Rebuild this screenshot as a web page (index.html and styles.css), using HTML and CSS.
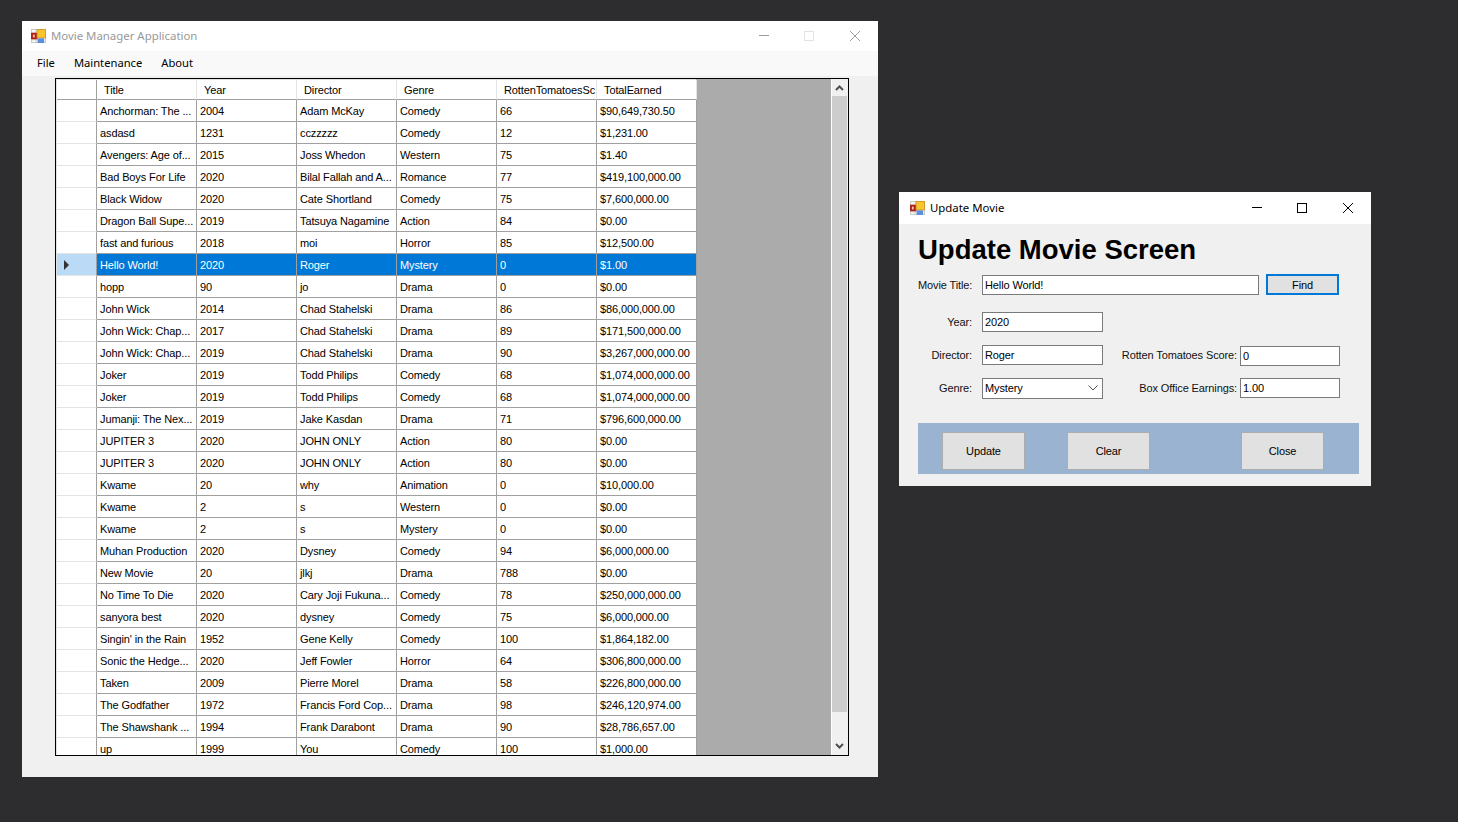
FILE: index.html
```html
<!DOCTYPE html>
<html lang="en">
<head>
    <meta charset="UTF-8">
    <title>Movie Manager Application</title>
    <link rel="stylesheet" href="styles.css">
</head>
<body>
    <!-- main window (inactive) -->
    <div class="window main-window">
        <div class="titlebar">
            <svg class="app-icon" viewBox="0 0 16 15">
                <rect x="0.5" y="0.5" width="15" height="14" fill="#f6f6f6" stroke="#c8c8c8"/>
                <path d="M5.5 0V15M0 4.5H6M0 11.5H6" stroke="#c8c8c8" fill="none"/>
                <rect x="0" y="4" width="7" height="7" fill="#b01e16"/>
                <rect x="2" y="6" width="2" height="3" fill="#f2c4b4"/>
                <rect x="6.5" y="0.5" width="9" height="9" fill="#f7c52e" stroke="#d49a22"/>
                <rect x="7" y="10" width="7" height="5" fill="#5b8fdc"/>
            </svg>
            <span class="title-text">Movie Manager Application</span>
            <div class="caption-btns">
                <svg width="12" height="12" viewBox="0 0 12 12"><path d="M2 5.5H12" stroke="#9d9d9d" fill="none"/></svg>
                <svg width="12" height="12" viewBox="0 0 12 12"><rect x="1.5" y="1.5" width="9" height="9" stroke="#e3e3e3" fill="none"/></svg>
                <svg width="12" height="12" viewBox="0 0 12 12"><path d="M1 1L11 11M11 1L1 11" stroke="#9d9d9d" fill="none"/></svg>
            </div>
        </div>
        <div class="menubar">
            <span>File</span>
            <span>Maintenance</span>
            <span>About</span>
        </div>
        <div class="grid-wrap">
            <div class="grid">
                <table class="movies">
                    <thead>
                        <tr><th class="row-head"></th><th>Title</th><th>Year</th><th>Director</th><th>Genre</th><th>RottenTomatoesSc</th><th>TotalEarned</th></tr>
                    </thead>
                    <tbody>
                        <tr><td class="row-head"></td><td>Anchorman: The ...</td><td>2004</td><td>Adam McKay</td><td>Comedy</td><td>66</td><td>$90,649,730.50</td></tr>
                        <tr><td class="row-head"></td><td>asdasd</td><td>1231</td><td>cczzzzz</td><td>Comedy</td><td>12</td><td>$1,231.00</td></tr>
                        <tr><td class="row-head"></td><td>Avengers: Age of...</td><td>2015</td><td>Joss Whedon</td><td>Western</td><td>75</td><td>$1.40</td></tr>
                        <tr><td class="row-head"></td><td>Bad Boys For Life</td><td>2020</td><td>Bilal Fallah and A...</td><td>Romance</td><td>77</td><td>$419,100,000.00</td></tr>
                        <tr><td class="row-head"></td><td>Black Widow</td><td>2020</td><td>Cate Shortland</td><td>Comedy</td><td>75</td><td>$7,600,000.00</td></tr>
                        <tr><td class="row-head"></td><td>Dragon Ball Supe...</td><td>2019</td><td>Tatsuya Nagamine</td><td>Action</td><td>84</td><td>$0.00</td></tr>
                        <tr><td class="row-head"></td><td>fast and furious</td><td>2018</td><td>moi</td><td>Horror</td><td>85</td><td>$12,500.00</td></tr>
                        <tr class="selected"><td class="row-head"><span class="row-arrow"></span></td><td>Hello World!</td><td>2020</td><td>Roger</td><td>Mystery</td><td>0</td><td>$1.00</td></tr>
                        <tr><td class="row-head"></td><td>hopp</td><td>90</td><td>jo</td><td>Drama</td><td>0</td><td>$0.00</td></tr>
                        <tr><td class="row-head"></td><td>John Wick</td><td>2014</td><td>Chad Stahelski</td><td>Drama</td><td>86</td><td>$86,000,000.00</td></tr>
                        <tr><td class="row-head"></td><td>John Wick: Chap...</td><td>2017</td><td>Chad Stahelski</td><td>Drama</td><td>89</td><td>$171,500,000.00</td></tr>
                        <tr><td class="row-head"></td><td>John Wick: Chap...</td><td>2019</td><td>Chad Stahelski</td><td>Drama</td><td>90</td><td>$3,267,000,000.00</td></tr>
                        <tr><td class="row-head"></td><td>Joker</td><td>2019</td><td>Todd Philips</td><td>Comedy</td><td>68</td><td>$1,074,000,000.00</td></tr>
                        <tr><td class="row-head"></td><td>Joker</td><td>2019</td><td>Todd Philips</td><td>Comedy</td><td>68</td><td>$1,074,000,000.00</td></tr>
                        <tr><td class="row-head"></td><td>Jumanji: The Nex...</td><td>2019</td><td>Jake Kasdan</td><td>Drama</td><td>71</td><td>$796,600,000.00</td></tr>
                        <tr><td class="row-head"></td><td>JUPITER 3</td><td>2020</td><td>JOHN ONLY</td><td>Action</td><td>80</td><td>$0.00</td></tr>
                        <tr><td class="row-head"></td><td>JUPITER 3</td><td>2020</td><td>JOHN ONLY</td><td>Action</td><td>80</td><td>$0.00</td></tr>
                        <tr><td class="row-head"></td><td>Kwame</td><td>20</td><td>why</td><td>Animation</td><td>0</td><td>$10,000.00</td></tr>
                        <tr><td class="row-head"></td><td>Kwame</td><td>2</td><td>s</td><td>Western</td><td>0</td><td>$0.00</td></tr>
                        <tr><td class="row-head"></td><td>Kwame</td><td>2</td><td>s</td><td>Mystery</td><td>0</td><td>$0.00</td></tr>
                        <tr><td class="row-head"></td><td>Muhan Production</td><td>2020</td><td>Dysney</td><td>Comedy</td><td>94</td><td>$6,000,000.00</td></tr>
                        <tr><td class="row-head"></td><td>New Movie</td><td>20</td><td>jlkj</td><td>Drama</td><td>788</td><td>$0.00</td></tr>
                        <tr><td class="row-head"></td><td>No Time To Die</td><td>2020</td><td>Cary Joji Fukuna...</td><td>Comedy</td><td>78</td><td>$250,000,000.00</td></tr>
                        <tr><td class="row-head"></td><td>sanyora best</td><td>2020</td><td>dysney</td><td>Comedy</td><td>75</td><td>$6,000,000.00</td></tr>
                        <tr><td class="row-head"></td><td>Singin' in the Rain</td><td>1952</td><td>Gene Kelly</td><td>Comedy</td><td>100</td><td>$1,864,182.00</td></tr>
                        <tr><td class="row-head"></td><td>Sonic the Hedge...</td><td>2020</td><td>Jeff Fowler</td><td>Horror</td><td>64</td><td>$306,800,000.00</td></tr>
                        <tr><td class="row-head"></td><td>Taken</td><td>2009</td><td>Pierre Morel</td><td>Drama</td><td>58</td><td>$226,800,000.00</td></tr>
                        <tr><td class="row-head"></td><td>The Godfather</td><td>1972</td><td>Francis Ford Cop...</td><td>Drama</td><td>98</td><td>$246,120,974.00</td></tr>
                        <tr><td class="row-head"></td><td>The Shawshank ...</td><td>1994</td><td>Frank Darabont</td><td>Drama</td><td>90</td><td>$28,786,657.00</td></tr>
                        <tr><td class="row-head"></td><td>up</td><td>1999</td><td>You</td><td>Comedy</td><td>100</td><td>$1,000.00</td></tr>
                    </tbody>
                </table>
                <div class="scrollbar">
                    <svg class="scroll-arrow" width="15" height="17" viewBox="0 0 15 17"><path d="M4 11L7.5 7.5L11 11" stroke="#505050" stroke-width="2" fill="none"/></svg>
                    <div class="scroll-track"><div class="scroll-thumb"></div></div>
                    <svg class="scroll-arrow" width="15" height="17" viewBox="0 0 15 17"><path d="M4 6L7.5 9.5L11 6" stroke="#505050" stroke-width="2" fill="none"/></svg>
                </div>
            </div>
        </div>
    </div>

    <!-- update dialog (active) -->
    <div class="window update-window">
        <div class="titlebar">
            <svg class="app-icon" viewBox="0 0 16 15">
                <rect x="0.5" y="0.5" width="15" height="14" fill="#f6f6f6" stroke="#c8c8c8"/>
                <path d="M5.5 0V15M0 4.5H6M0 11.5H6" stroke="#c8c8c8" fill="none"/>
                <rect x="0" y="4" width="7" height="7" fill="#b01e16"/>
                <rect x="2" y="6" width="2" height="3" fill="#f2c4b4"/>
                <rect x="6.5" y="0.5" width="9" height="9" fill="#f7c52e" stroke="#d49a22"/>
                <rect x="7" y="10" width="7" height="5" fill="#5b8fdc"/>
            </svg>
            <span class="title-text">Update Movie</span>
            <div class="caption-btns">
                <svg width="12" height="12" viewBox="0 0 12 12"><path d="M2 5.5H12" stroke="#000" fill="none"/></svg>
                <svg width="12" height="12" viewBox="0 0 12 12"><rect x="1.5" y="1.5" width="9" height="9" stroke="#000" fill="none"/></svg>
                <svg width="12" height="12" viewBox="0 0 12 12"><path d="M1 1L11 11M11 1L1 11" stroke="#000" fill="none"/></svg>
            </div>
        </div>
        <div class="form-body">
            <h1>Update Movie Screen</h1>
            <div class="form-row row-title">
                <label>Movie Title:</label>
                <div class="field field-wide">Hello World!</div>
                <button class="find-btn" type="button">Find</button>
            </div>
            <div class="form-row row-year">
                <label>Year:</label>
                <div class="field">2020</div>
            </div>
            <div class="form-row row-director">
                <label>Director:</label>
                <div class="field">Roger</div>
                <label class="label-right">Rotten Tomatoes Score:</label>
                <div class="field field-right">0</div>
            </div>
            <div class="form-row row-genre">
                <label>Genre:</label>
                <div class="field combo">Mystery
                    <svg width="10" height="6" viewBox="0 0 10 6"><path d="M0.5 0.5L5 5L9.5 0.5" stroke="#555" fill="none"/></svg>
                </div>
                <label class="label-right">Box Office Earnings:</label>
                <div class="field field-right">1.00</div>
            </div>
            <div class="button-panel">
                <button type="button">Update</button>
                <button type="button" class="btn-clear">Clear</button>
                <button type="button" class="btn-close">Close</button>
            </div>
        </div>
    </div>
</body>
</html>
```

FILE: styles.css
```css
body {
    margin: 0;
    height: 822px;
    overflow: hidden;
    background-color: #2d2d30;
    font-family: "Liberation Sans", Arial, sans-serif;
    font-size: 11px;
    letter-spacing: -0.12px;
    color: #000;
}

/* windows sit on a free desktop */
.window {
    position: absolute;
    background-color: #f0f0f0;
    box-sizing: border-box;
}

.main-window {
    left: 22px;
    top: 21px;
    width: 856px;
    height: 756px;
}

.update-window {
    left: 899px;
    top: 192px;
    width: 472px;
    height: 294px;
}

/* title bars */
.titlebar {
    display: flex;
    align-items: center;
    height: 30px;
    padding-left: 9px;
    background-color: #fff;
    font-family: "Noto Sans", "Open Sans", sans-serif;
    font-size: 11.4px;
    letter-spacing: 0;
}

.title-text {
    position: relative;
    top: -1px;
}

.update-window .titlebar {
    height: 32px;
    padding-left: 11px;
}

.app-icon {
    flex: none;
    width: 15px;
    height: 14px;
    margin-right: 5px;
}

.main-window .title-text {
    color: #999;
}

.caption-btns {
    display: flex;
    gap: 34px;
    margin-left: auto;
    padding-right: 17px;
}

/* menu */
.menubar {
    display: flex;
    align-items: center;
    gap: 19px;
    height: 25px;
    padding: 0 0 2px 15px;
    box-sizing: border-box;
    background-color: #f9f9f9;
    font-family: "Noto Sans", "Open Sans", sans-serif;
    font-size: 11.2px;
    letter-spacing: 0;
}

/* data grid */
.grid-wrap {
    padding: 2px 0 0 33px;
}

.grid {
    display: flex;
    justify-content: space-between;
    box-sizing: border-box;
    width: 794px;
    height: 678px;
    border: 1px solid #000;
    background-color: #ababab;
    overflow: hidden;
}

.movies {
    border-collapse: separate;
    border-spacing: 0;
    table-layout: fixed;
    width: 640px;
    height: min-content;
    margin: 1px 0 0 1px;
    background-color: #fff;
    box-shadow: -1px -1px 0 #e2e2e2;
}

.movies th,
.movies td {
    box-sizing: border-box;
    width: 100px;
    padding: 0 0 0 3px;
    white-space: nowrap;
    overflow: hidden;
    font-weight: normal;
    text-align: left;
    border-right: 1px solid #a0a0a0;
    border-bottom: 1px solid #a0a0a0;
}

.movies td {
    height: 22px;
}

.movies th {
    height: 20px;
    padding-left: 7px;
    border-right-color: #e4e4e4;
}

.movies .row-head {
    position: relative;
    width: 40px;
    padding: 0;
    border-bottom-color: #e4e4e4;
    border-right-color: #a0a0a0;
}

.movies th.row-head {
    border-bottom-color: #a0a0a0;
}

.selected td {
    background-color: #0078d7;
    color: #fff;
}

.movies .selected .row-head {
    background-color: #bbdaf5;
}

.row-arrow {
    position: absolute;
    left: 7px;
    top: 6px;
    border-left: 5px solid #333;
    border-top: 5px solid transparent;
    border-bottom: 5px solid transparent;
}

.scrollbar {
    display: flex;
    flex-direction: column;
    flex: none;
    width: 15px;
    padding-right: 1px;
    background-color: #f0f0f0;
    border-left: 1px solid #fff;
}

.scroll-arrow {
    flex: none;
}

.scroll-track {
    flex: 1;
}

.scroll-thumb {
    height: 616px;
    background-color: #cdcdcd;
}

/* update form */
.form-body {
    padding: 0 12px 0 19px;
}

h1 {
    margin: 0;
    padding-top: 10px;
    height: 41px;
    font-size: 27.5px;
    line-height: 32px;
    font-weight: bold;
    letter-spacing: 0;
}

.form-row {
    display: flex;
    align-items: center;
    height: 20px;
}

.row-year {
    margin-top: 17px;
}

.row-director,
.row-genre {
    margin-top: 13px;
}

.form-row label {
    flex: none;
    width: 54px;
    margin-right: 10px;
    text-align: right;
    color: #111;
    white-space: nowrap;
}

.form-row .label-right {
    width: 134px;
    margin-right: 3px;
}

.field {
    flex: none;
    box-sizing: border-box;
    width: 121px;
    height: 20px;
    padding: 0 2px;
    line-height: 18px;
    background-color: #fff;
    border: 1px solid #7a7a7a;
}

.field-wide {
    width: 277px;
}

.field-right {
    width: 100px;
}

.row-director .field-right {
    align-self: flex-start;
    margin-top: 1px;
}

.combo {
    display: flex;
    align-items: center;
    justify-content: space-between;
    padding-right: 4px;
    height: 21px;
}

button {
    font-family: "Liberation Sans", Arial, sans-serif;
    font-size: 11px;
    letter-spacing: -0.12px;
    color: #000;
    background-color: #e1e1e1;
    border: 1px solid #adadad;
    padding: 0;
}

.find-btn {
    align-self: flex-start;
    width: 73px;
    height: 21px;
    margin: -1px 0 0 7px;
    border: 2px solid #0078d7;
}

.button-panel {
    display: flex;
    align-items: flex-start;
    box-sizing: border-box;
    width: 441px;
    height: 51px;
    margin-top: 25px;
    padding: 9px 0 0 24px;
    background-color: #9ab3d1;
}

.button-panel button {
    width: 83px;
    height: 38px;
}

.btn-clear {
    margin-left: 42px;
}

.btn-close {
    margin-left: 91px;
}
```
